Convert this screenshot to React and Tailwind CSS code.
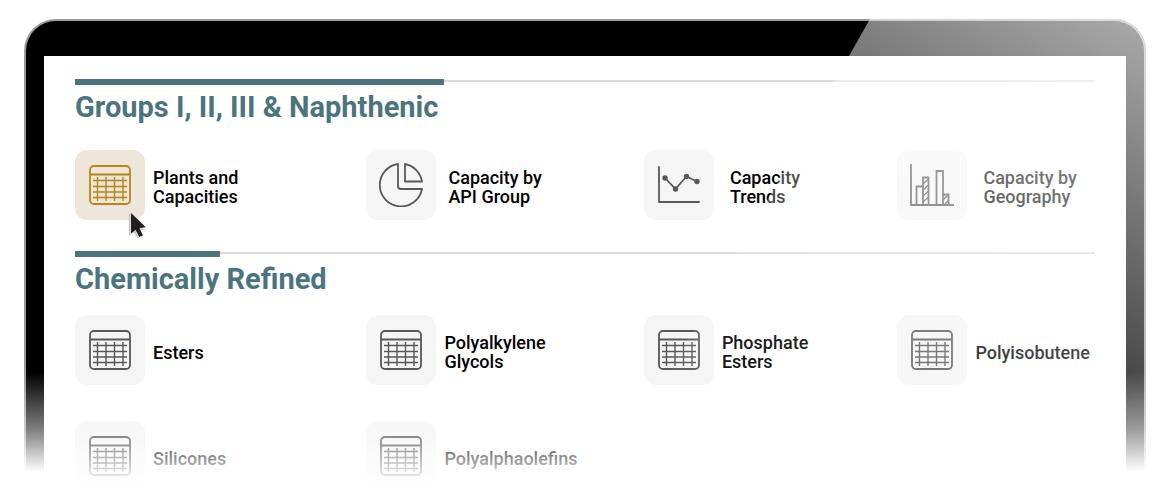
function TableIcon() {
  return (
    <svg viewBox="0 0 42 40" className="h-10 w-[42px]" fill="none" stroke="currentColor" strokeWidth="1.8" aria-hidden="true">
      <rect x="1" y="1" width="40" height="38" rx="4" />
      <path d="M1 9.5h40" />
      <path d="M4 15.500h34M4 21.500h34M4 27h34M4 32.500h34M8.500 12v24M17 12v24M25.500 12v24M34 12v24" strokeWidth="1.4" />
    </svg>
  );
}

function PieIcon() {
  return (
    <svg viewBox="0 0 44 44" className="size-11" fill="none" stroke="currentColor" strokeWidth="1.8" strokeLinejoin="round" aria-hidden="true">
      <path d="M19 1A21.300 21.300 0 1 0 43 26H22a3 3 0 0 1-3-3Z" />
      <path d="M26 1V18.500H43A21.300 21.300 0 0 0 26 1Z" />
    </svg>
  );
}

function TrendIcon() {
  return (
    <svg viewBox="0 0 42 38" className="h-[38px] w-[42px]" fill="none" stroke="currentColor" strokeWidth="1.8" aria-hidden="true">
      <path d="M1 1v35h40" strokeLinecap="round" strokeLinejoin="round" />
      <path d="M7 12l10.500 11L28.500 10.500l10.500 5" />
      <g fill="currentColor" stroke="none">
        <circle cx="7" cy="12" r="2.700" />
        <circle cx="17.500" cy="23" r="2.700" />
        <circle cx="28.500" cy="10.500" r="2.700" />
        <circle cx="39" cy="15.500" r="2.700" />
      </g>
    </svg>
  );
}

function BarsIcon() {
  return (
    <svg viewBox="0 0 44 42" className="h-[42px] w-11" fill="none" stroke="currentColor" strokeWidth="1.8" aria-hidden="true">
      <path d="M1 0v41h43" />
      <path d="M6.500 41V22.500h6M13 41V13.500h5.500v27.500M26.500 41V7h6.500v34M33 30.500h5.500V41" />
      <path d="M13 20l5.500-5M13 26l5.500-5M13 32l5.500-5M13 38l5.500-5M33 36l5-5M34 41l4.500-4.500" strokeWidth="1.4" />
    </svg>
  );
}

const icons = { table: TableIcon, pie: PieIcon, trend: TrendIcon, bars: BarsIcon };

function Cursor() {
  return (
    <svg viewBox="0 0 18 28" className="absolute top-[61px] left-[54px] h-7 w-[18px]" aria-hidden="true">
      <path d="M0 2v23l5-4 3.500 6 4-2-3-6h5Z" fill="#bdbdbd" />
      <path d="M1.500 1v22.500l5-4 3.500 7 4.500-2-3.500-7 6.500-1Z" fill="#231f20" stroke="#fff" strokeWidth=".8" />
    </svg>
  );
}

function Item({ icon, label, gap = "gap-2", active = false }) {
  const Icon = icons[icon];
  return (
    <a href="#" className={`flex items-center ${gap}`}>
      <span
        className={
          active
            ? "relative flex size-[70px] shrink-0 items-center justify-center rounded-xl bg-[#eee6d8] text-[#b5851a]"
            : "relative flex size-[70px] shrink-0 items-center justify-center rounded-xl bg-[#f5f5f5] text-[#58585a]"
        }
      >
        <Icon />
        {active && <Cursor />}
      </span>
      <span className="pt-1 text-lg leading-[19px] font-medium whitespace-pre-line text-black">{label}</span>
    </a>
  );
}

function Heading({ children, bar }) {
  return (
    <header>
      <div className="flex h-1.5">
        <div className={`h-1.5 bg-[#4b747f] ${bar}`} />
        <div className="flex-1 pt-px">
          <div className="h-0.5 bg-[#dadada]" />
        </div>
      </div>
      <h2 className="pt-1 text-[29px] leading-9 font-bold text-[#4b747f]">{children}</h2>
    </header>
  );
}

const columns = "grid grid-cols-[292fr_278fr_254fr_198fr]";

export default function App() {
  return (
    <main className="h-screen overflow-hidden bg-white px-6 pt-[19px] font-[Roboto,sans-serif]">
      <div className="relative flex h-full flex-col overflow-hidden rounded-t-[32px] bg-[#9b9b9b] px-0.5 pt-0.5">
        <div className="flex flex-1 flex-col rounded-t-[30px] bg-black px-[18px] pt-[35px]">
          <div className="pointer-events-none absolute inset-x-0 bottom-0 h-32 bg-linear-to-b from-white/0 via-white/50 via-45% to-white to-78%" />
          <div className="relative flex-1 bg-white px-[31px] pt-[23px]">
            <section>
              <Heading bar="w-[369px]">Groups I, II, III &amp; Naphthenic</Heading>
              <div className={`${columns} pt-[25px]`}>
                <Item icon="table" label={"Plants and\nCapacities"} active />
                <Item icon="pie" label={"Capacity by\nAPI Group"} gap="gap-3" />
                <Item icon="trend" label={"Capacity\nTrends"} gap="gap-4" />
                <Item icon="bars" label={"Capacity by\nGeography"} gap="gap-4" />
              </div>
            </section>
            <section className="pt-[31px]">
              <Heading bar="w-[145px]">Chemically Refined</Heading>
              <div className={`${columns} gap-y-9 pt-[18px]`}>
                <Item icon="table" label="Esters" />
                <Item icon="table" label={"Polyalkylene\nGlycols"} />
                <Item icon="table" label={"Phosphate\nEsters"} />
                <Item icon="table" label="Polyisobutene" />
                <Item icon="table" label="Silicones" />
                <Item icon="table" label="Polyalphaolefins" />
              </div>
            </section>
            <div className="pointer-events-none absolute inset-x-0 bottom-0 h-28 bg-linear-to-b from-white/0 via-white/35 via-50% to-white to-88%" />
          </div>
        </div>
        <div className="pointer-events-none absolute inset-0 bg-[linear-gradient(208deg,rgb(255_255_255/0.67),rgb(255_255_255/0)_59%)] [clip-path:polygon(846px_0,100%_0,100%_100%,573px_100%)]" />
      </div>
    </main>
  );
}
